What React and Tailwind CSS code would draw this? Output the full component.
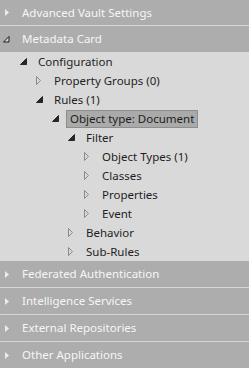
import React from 'react'

const font = { fontFamily: '"Segoe UI", "Noto Sans", "Open Sans", sans-serif' }

const indent = ['pl-[16px]', 'pl-[32px]', 'pl-[48px]', 'pl-[64px]', 'pl-[80px]']

const tree = [
  { level: 0, label: 'Configuration', open: true },
  { level: 1, label: 'Property Groups (0)' },
  { level: 1, label: 'Rules (1)', open: true },
  { level: 2, label: 'Object type: Document', open: true, selected: true },
  { level: 3, label: 'Filter', open: true },
  { level: 4, label: 'Object Types (1)' },
  { level: 4, label: 'Classes' },
  { level: 4, label: 'Properties' },
  { level: 4, label: 'Event' },
  { level: 3, label: 'Behavior' },
  { level: 3, label: 'Sub-Rules' },
]

function TreeGlyph({ open }) {
  if (open) {
    return (
      <svg width="7" height="7" viewBox="0 0 7 7" className="block">
        <polygon points="6.5,0.5 6.5,6.5 0.5,6.5" fill="#262626" stroke="#262626" strokeWidth="1" />
      </svg>
    )
  }
  return (
    <svg width="6" height="9" viewBox="0 0 6 9" className="block">
      <polygon points="0.5,0.5 0.5,8.5 4.5,4.5" fill="none" stroke="#8a8a8a" strokeWidth="1" />
    </svg>
  )
}

function Header({ title, open, tall }) {
  return (
    <div className={`flex items-center bg-[#adadad] text-[#f6f6f6] text-[11.5px] ${tall ? 'h-[26px]' : 'h-[25px]'}`}>
      <div className="w-[22px] pl-[4px] flex items-center">
        {open ? (
          <svg width="7" height="7" viewBox="0 0 7 7" className="block -ml-[1px]">
            <polygon points="6,0.5 6,6 0.5,6" fill="#d8d8d8" stroke="#1a1a1a" strokeWidth="1" />
          </svg>
        ) : (
          <svg width="5" height="7" viewBox="0 0 5 7" className="block ml-[1px]">
            <polygon points="0,0 0,7 4,3.5" fill="#ececec" />
          </svg>
        )}
      </div>
      <span>{title}</span>
    </div>
  )
}

function Sep() {
  return <div className="h-px bg-[#d6d6d6]" />
}

export default function App() {
  return (
    <div style={font} className="w-[249px] h-[368px] overflow-hidden flex flex-col bg-[#adadad]">
      <Header title="Advanced Vault Settings" />
      <Sep />
      <Header title="Metadata Card" open tall />
      <div className="bg-[#d9d9d9] h-[209px] text-[11.5px] text-[#1e1e1e]">
        {tree.map((n, i) => (
          <div key={i} className={`h-[19px] flex items-center ${indent[n.level]}`}>
            <div className="w-[22px] pl-[4px] flex items-center">
              <TreeGlyph open={n.open} />
            </div>
            {n.selected ? (
              <span className="-ml-[4px] h-[18px] flex items-center px-[3px] bg-[#aaaaaa] border border-[#8e8e8e]">
                {n.label}
              </span>
            ) : (
              <span>{n.label}</span>
            )}
          </div>
        ))}
      </div>
      <Header title="Federated Authentication" tall />
      <Sep />
      <Header title="Intelligence Services" tall />
      <Sep />
      <Header title="External Repositories" tall />
      <Sep />
      <Header title="Other Applications" tall />
    </div>
  )
}
